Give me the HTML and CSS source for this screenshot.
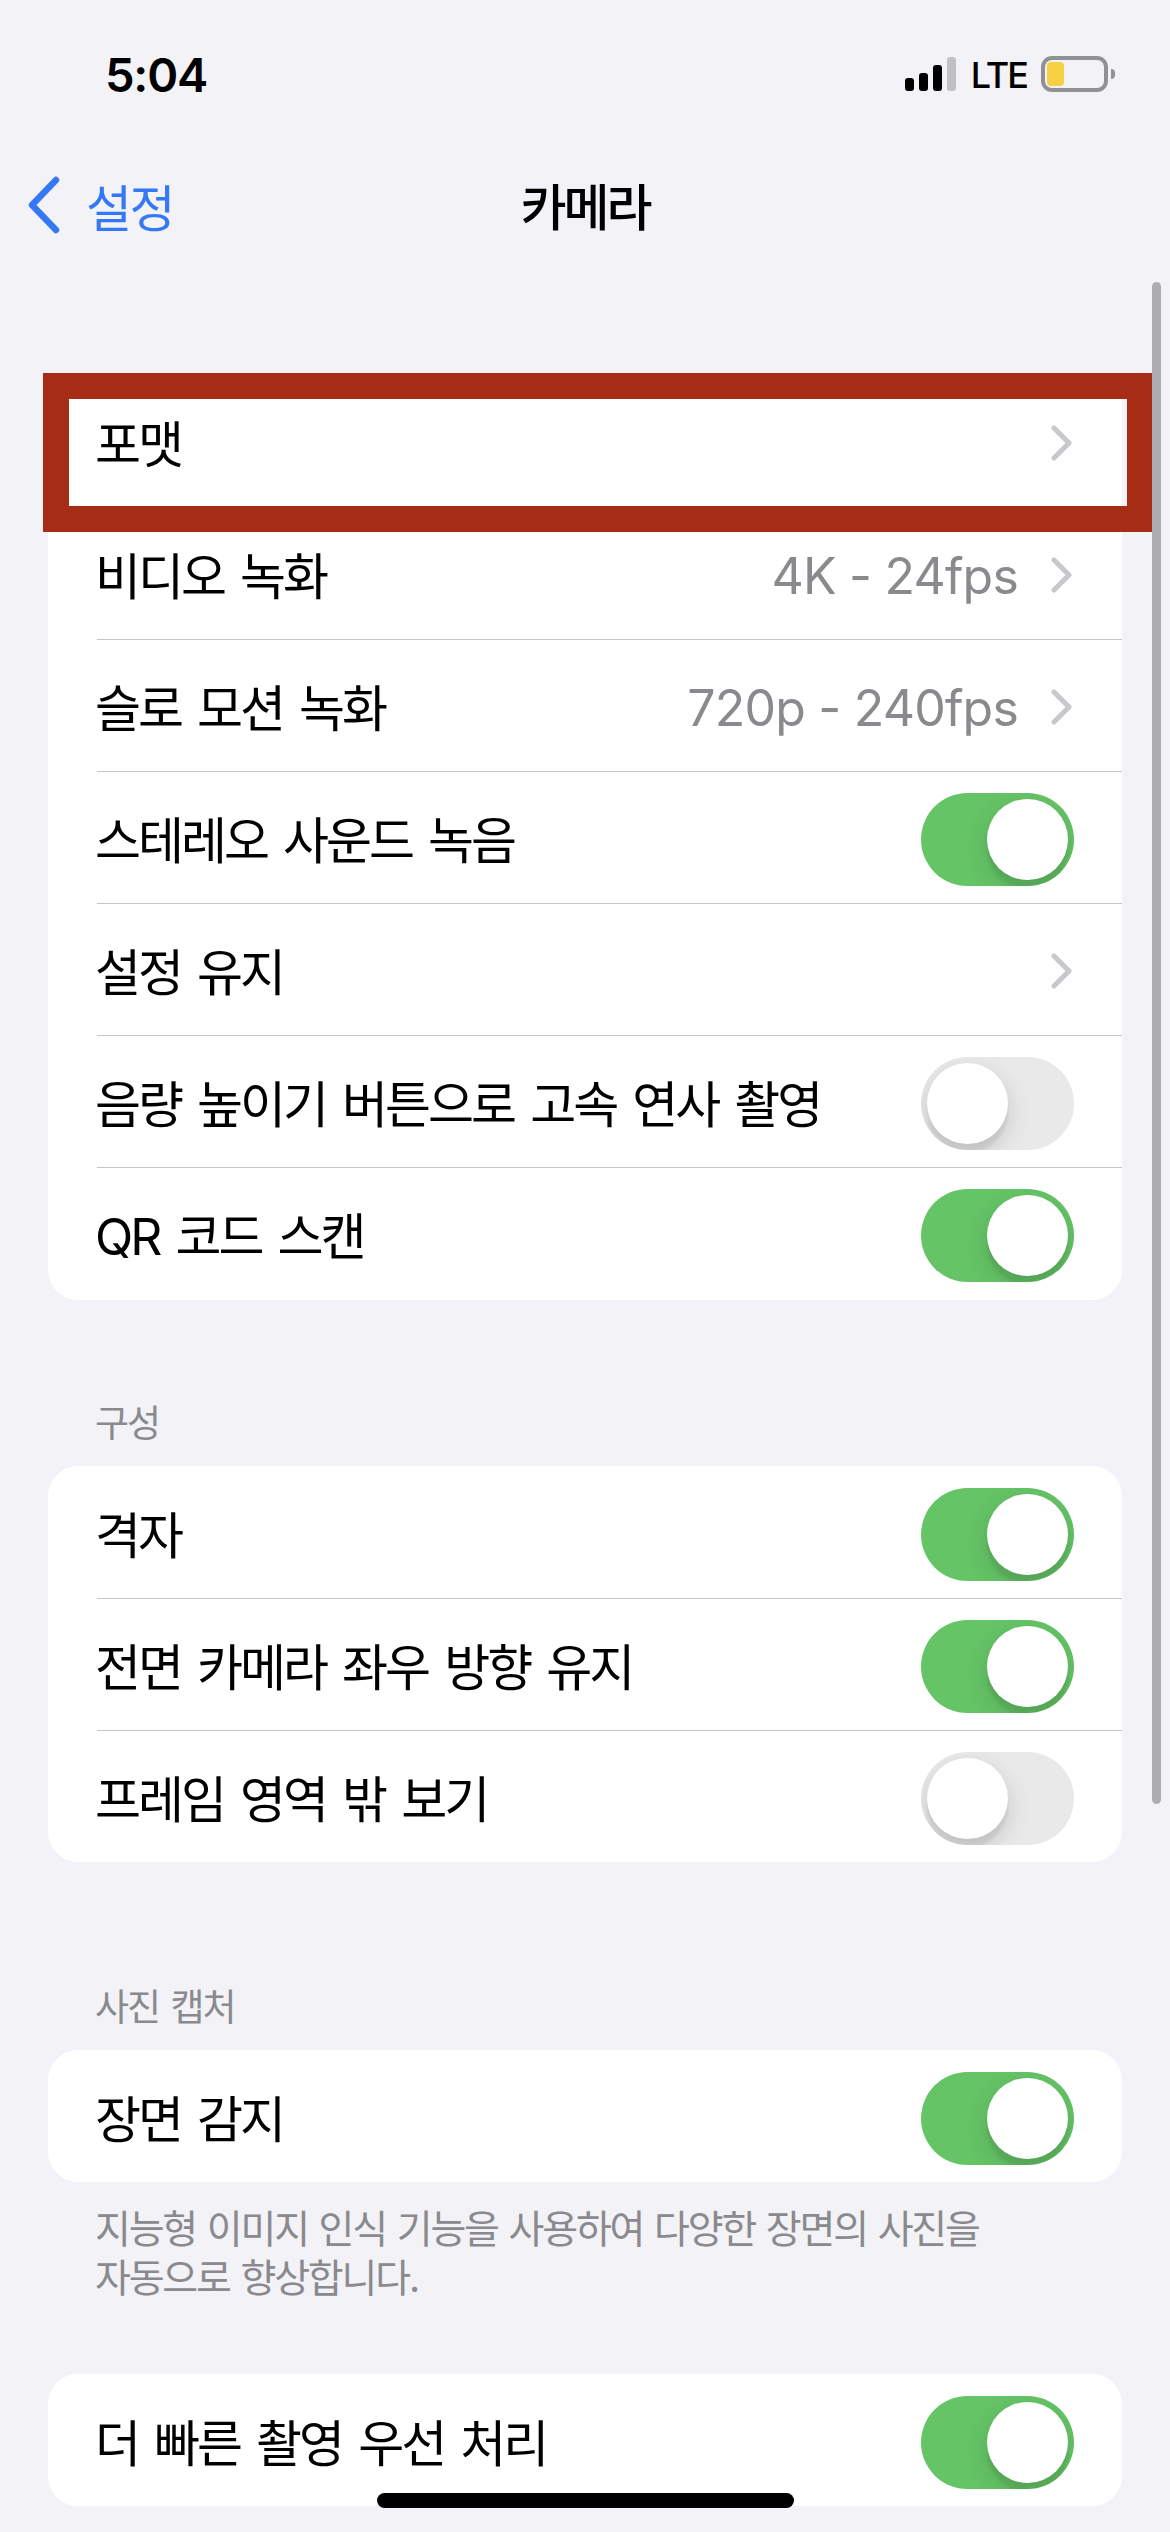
FILE: index.html
```html
<!DOCTYPE html>
<html lang="ko">

<head>
  <meta charset="UTF-8">
  <meta name="viewport" content="width=device-width, initial-scale=1.0">
  <title>카메라</title>

  <link rel="stylesheet" href="styles.css">
</head>

<body>
  <div class="screen">
    <div class="status">
      <span class="status__time">5:04</span>
      <div class="status__right">
        <div class="signal">
          <span class="signal__bar signal__bar--1"></span>
          <span class="signal__bar signal__bar--2"></span>
          <span class="signal__bar signal__bar--3"></span>
          <span class="signal__bar signal__bar--4"></span>
        </div>
        <span class="status__net">LTE</span>
        <div class="battery">
          <div class="battery__body"><span class="battery__fill"></span></div>
          <span class="battery__nub"></span>
        </div>
      </div>
    </div>

    <div class="nav">
      <div class="nav__back">
        <svg class="nav__chevron" width="34" height="58" viewBox="0 0 34 58">
          <path d="M29 4 L5 29 L29 54" fill="none" stroke="#3478f6" stroke-width="6.5" stroke-linecap="round" stroke-linejoin="round" />
        </svg>
        <span>설정</span>
      </div>
      <div class="nav__title">카메라</div>
    </div>

    <div class="card card--first">
      <div class="row">
        <span class="row__label">포맷</span>
        <svg class="chevron" width="21" height="36" viewBox="0 0 21 36"><path d="M3 3 L18 18 L3 33" /></svg>
      </div>
      <div class="row">
        <span class="row__label">비디오 녹화</span>
        <span class="row__value">4K - 24fps</span>
        <svg class="chevron" width="21" height="36" viewBox="0 0 21 36"><path d="M3 3 L18 18 L3 33" /></svg>
      </div>
      <div class="row">
        <span class="row__label">슬로 모션 녹화</span>
        <span class="row__value">720p - 240fps</span>
        <svg class="chevron" width="21" height="36" viewBox="0 0 21 36"><path d="M3 3 L18 18 L3 33" /></svg>
      </div>
      <div class="row">
        <span class="row__label">스테레오 사운드 녹음</span>
        <span class="toggle toggle--on"><span class="toggle__knob"></span></span>
      </div>
      <div class="row">
        <span class="row__label">설정 유지</span>
        <svg class="chevron" width="21" height="36" viewBox="0 0 21 36"><path d="M3 3 L18 18 L3 33" /></svg>
      </div>
      <div class="row">
        <span class="row__label">음량 높이기 버튼으로 고속 연사 촬영</span>
        <span class="toggle"><span class="toggle__knob"></span></span>
      </div>
      <div class="row">
        <span class="row__label">QR 코드 스캔</span>
        <span class="toggle toggle--on"><span class="toggle__knob"></span></span>
      </div>
    </div>

    <div class="group-title group-title--grid">구성</div>
    <div class="card">
      <div class="row">
        <span class="row__label">격자</span>
        <span class="toggle toggle--on"><span class="toggle__knob"></span></span>
      </div>
      <div class="row">
        <span class="row__label">전면 카메라 좌우 방향 유지</span>
        <span class="toggle toggle--on"><span class="toggle__knob"></span></span>
      </div>
      <div class="row">
        <span class="row__label">프레임 영역 밖 보기</span>
        <span class="toggle"><span class="toggle__knob"></span></span>
      </div>
    </div>

    <div class="group-title group-title--photo">사진 캡처</div>
    <div class="card">
      <div class="row">
        <span class="row__label">장면 감지</span>
        <span class="toggle toggle--on"><span class="toggle__knob"></span></span>
      </div>
    </div>
    <p class="note">지능형 이미지 인식 기능을 사용하여 다양한 장면의 사진을<br>자동으로 향상합니다.</p>

    <div class="card card--last">
      <div class="row">
        <span class="row__label">더 빠른 촬영 우선 처리</span>
        <span class="toggle toggle--on"><span class="toggle__knob"></span></span>
      </div>
    </div>

    <!-- red annotation box over the first row -->
    <div class="highlight"></div>
    <div class="scrollbar"></div>
    <div class="home-bar"></div>
  </div>
</body>

</html>
```

FILE: styles.css
```css
* {
  box-sizing: border-box;
}

body {
  margin: 0;
  background: #f2f2f7;
  font-family: "Inter", "Noto Sans CJK KR", sans-serif;
  color: #000;
}

.screen {
  position: relative;
  width: 1170px;
  height: 2532px;
  overflow: hidden;
  background: #f2f2f7;
}

/* status bar */
.status {
  display: flex;
  align-items: center;
  justify-content: space-between;
  height: 148px;
  padding: 0 55px 0 105px;
}

.status__time {
  font-size: 47px;
  font-weight: 600;
  line-height: 1;
  letter-spacing: -1.2px;
}

.status__right {
  display: flex;
  align-items: center;
}

.signal {
  display: flex;
  align-items: flex-end;
  gap: 5px;
  height: 34px;
  margin-right: 15px;
}

.signal__bar {
  width: 9px;
  border-radius: 3px;
  background: #000;
}

.signal__bar--1 {
  height: 13px;
}

.signal__bar--2 {
  height: 18px;
}

.signal__bar--3 {
  height: 26px;
}

.signal__bar--4 {
  height: 34px;
  background: #c1c1c5;
}

.status__net {
  margin-top: 2px;
  margin-right: 14px;
  font-size: 36px;
  font-weight: 500;
  line-height: 1;
  letter-spacing: -2px;
}

.battery {
  display: flex;
  align-items: center;
}

.battery__body {
  width: 67px;
  height: 36px;
  padding: 2px;
  border: 4px solid #909095;
  border-radius: 11px;
}

.battery__fill {
  display: block;
  width: 17px;
  height: 100%;
  border-radius: 4px;
  background: #f7cf45;
}

.battery__nub {
  width: 4px;
  height: 10px;
  margin-left: 3px;
  border-radius: 0 5px 5px 0;
  background: #909095;
}

/* nav */
.nav {
  display: grid;
  grid-template-columns: 1fr auto 1fr;
  align-items: center;
  height: 114px;
  margin-bottom: 2px;
  padding-left: 27px;
}

.nav__back {
  display: flex;
  align-items: center;
  gap: 25px;
  font-size: 50px;
  letter-spacing: -2.6px;
  color: #3478f6;
}

.nav__title {
  margin-bottom: 2px;
  padding-right: 27px;
  font-size: 50px;
  font-weight: 500;
  letter-spacing: -3px;
}

/* list */
.card {
  width: 1074px;
  margin-left: 48px;
  border-radius: 30px;
  background: #fff;
}

.card--first {
  margin-top: 113px;
  padding-bottom: 1px;
}

.card--last {
  margin-top: 72px;
}

.row {
  display: flex;
  align-items: center;
  height: 132px;
  margin-left: 49px;
  padding-top: 3px;
  padding-right: 48px;
  border-top: 1px solid #c6c6c8;
}

.row:first-child {
  border-top-color: transparent;
}

.row__label {
  flex: 1;
  margin-bottom: 4px;
  margin-left: -2px;
  font-size: 50px;
  letter-spacing: -3px;
  word-spacing: 5px;
  white-space: nowrap;
}

.row__value {
  margin-top: 1px;
  margin-right: 33px;
  font-size: 50px;
  letter-spacing: -.8px;
  color: #8a8a8e;
}

.chevron {
  margin-right: 2px;
}

.chevron path {
  fill: none;
  stroke: #c7c7cc;
  stroke-width: 5;
  stroke-linecap: round;
  stroke-linejoin: round;
}

.toggle {
  display: flex;
  justify-content: flex-start;
  flex: none;
  width: 153px;
  height: 93px;
  padding: 6px;
  overflow: hidden;
  border-radius: 47px;
  background: #e9e9ea;
}

.toggle--on {
  justify-content: flex-end;
  background: #65c466;
}

.toggle__knob {
  width: 81px;
  height: 81px;
  border-radius: 50%;
  background: #fff;
  box-shadow: 0 9px 24px rgba(0, 0, 0, .15), 0 9px 3px rgba(0, 0, 0, .06);
}

.group-title {
  height: 40px;
  margin-bottom: 22px;
  padding-left: 95px;
  font-size: 37px;
  line-height: 40px;
  letter-spacing: -2px;
  word-spacing: 3px;
  color: #8a8a8e;
}

.group-title--grid {
  margin-top: 104px;
}

.group-title--photo {
  margin-top: 126px;
}

.note {
  margin: 22px 0 0;
  padding-left: 95px;
  font-size: 39px;
  line-height: 49px;
  letter-spacing: -2.2px;
  word-spacing: 2px;
  color: #8a8a8e;
}

/* overlays */
.highlight {
  position: absolute;
  left: 43px;
  top: 373px;
  width: 1110px;
  height: 159px;
  border: 26px solid #a62c15;
}

.scrollbar {
  position: absolute;
  left: 1152px;
  top: 282px;
  width: 9px;
  height: 1522px;
  border-radius: 5px;
  background: #aeaeb2;
}

.home-bar {
  position: absolute;
  left: 377px;
  top: 2493px;
  width: 417px;
  height: 15px;
  border-radius: 8px;
  background: #000;
}
```
